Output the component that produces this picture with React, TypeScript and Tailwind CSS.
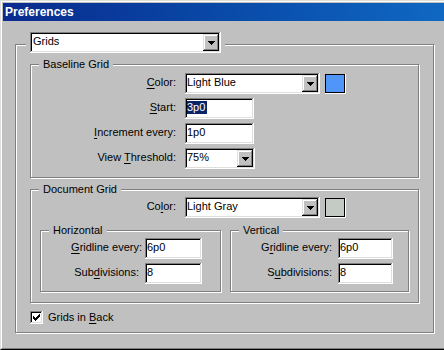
import type { ReactNode } from 'react';

// classic 3D edges
const sunken =
  'shadow-[inset_-1px_-1px_0_#fff,inset_1px_1px_0_#808080,inset_-2px_-2px_0_#dfdfdf,inset_2px_2px_0_#000]';
const raised =
  'shadow-[inset_-1px_-1px_0_#000,inset_1px_1px_0_#dfdfdf,inset_-2px_-2px_0_#808080,inset_2px_2px_0_#fff]';
const etched = 'border border-[#808080] shadow-[inset_1px_1px_0_#fff,1px_1px_0_#fff]';

function U({ children }: { children: ReactNode }) {
  return <span className="underline underline-offset-2">{children}</span>;
}

function Arrow() {
  return (
    <svg width="7" height="4" viewBox="0 0 7 4" shapeRendering="crispEdges">
      <path d="M0 0h7v1H0zM1 1h5v1H1zM2 2h3v1H2zM3 3h1v1H3z" fill="#000" />
    </svg>
  );
}

function Select({ value, className }: { value: string; className: string }) {
  return (
    <div className={`flex h-[21px] bg-white p-[2px] ${sunken} ${className}`}>
      <span className="flex-1 overflow-hidden whitespace-nowrap pt-[1px] leading-[13px]">{value}</span>
      <span className={`flex h-[17px] w-[16px] items-center justify-center bg-[#c0c0c0] pl-[1px] pt-[1px] ${raised}`}>
        <Arrow />
      </span>
    </div>
  );
}

function Field({ children, className }: { children: ReactNode; className: string }) {
  return (
    <div className={`h-[21px] bg-white p-[2px] ${sunken} ${className}`}>
      <div className="pt-[1px] leading-[13px] whitespace-nowrap">{children}</div>
    </div>
  );
}

function Swatch({ color }: { color: string }) {
  return (
    <div className="ml-[5px] mt-[1px] h-[20px] w-[21px] shadow-[inset_-1px_-1px_0_#fff] pb-[1px] pr-[1px]">
      <div className={`h-full w-full border border-black ${color}`} />
    </div>
  );
}

function Label({ children, className }: { children: ReactNode; className: string }) {
  return <div className={`pb-[2px] text-right leading-[13px] whitespace-nowrap ${className}`}>{children}</div>;
}

function GroupTitle({ children }: { children: ReactNode }) {
  return <div className="-mt-[7px] ml-[8px] w-fit bg-[#c0c0c0] px-[4px] leading-[13px]">{children}</div>;
}

export default function App() {
  return (
    <div className="h-[350px] w-[444px] overflow-hidden bg-[#c0c0c0] font-['Liberation_Sans',Arial,sans-serif] text-[11px] text-black">
      <div className="h-full border-b border-l border-t border-b-black border-l-[#dfdfdf] border-t-[#dfdfdf]">
        <div className="h-full border-b border-l border-t border-b-[#808080] border-l-white border-t-white py-[1px] pl-[1px]">
          {/* title bar */}
          <div className="flex h-[18px] items-center bg-linear-to-r from-[#0a2a8e] to-[#1068c2] pl-[2px]">
            <span className="text-[12px] font-bold leading-[14px] text-white">Preferences</span>
          </div>

          <div className={`ml-[12px] mt-[23px] w-[419px] ${etched} pb-[8px]`}>
            <div className="-mt-[13px] ml-[10px] w-fit bg-[#c0c0c0] px-[4px]">
              <Select value="Grids" className="w-[191px] pl-[3px]" />
            </div>

            {/* Baseline Grid */}
            <div className={`ml-[14px] mt-[11px] w-[389px] ${etched} pb-[8px]`}>
              <GroupTitle>Baseline Grid</GroupTitle>
              <div className="mt-[2px] flex flex-col gap-[4px]">
                <div className="flex items-center">
                  <Label className="w-[145px]">
                    <U>C</U>olor:
                  </Label>
                  <Select value="Light Blue" className="ml-[9px] w-[135px]" />
                  <Swatch color="bg-[#5096f8]" />
                </div>
                <div className="flex items-center">
                  <Label className="w-[145px]">
                    <U>S</U>tart:
                  </Label>
                  <Field className="ml-[9px] w-[69px]">
                    <span className="inline-block h-[13px] bg-[#0a246a] pr-[2px] text-white">3p0</span>
                  </Field>
                </div>
                <div className="flex items-center">
                  <Label className="w-[145px]">
                    <U>I</U>ncrement every:
                  </Label>
                  <Field className="ml-[9px] w-[69px]">1p0</Field>
                </div>
                <div className="flex items-center">
                  <Label className="w-[145px]">
                    View <U>T</U>hreshold:
                  </Label>
                  <Select value="75%" className="ml-[9px] w-[70px]" />
                </div>
              </div>
            </div>

            {/* Document Grid */}
            <div className={`ml-[14px] mt-[11px] w-[389px] ${etched} pb-[10px]`}>
              <GroupTitle>Document Grid</GroupTitle>
              <div className="mt-[1px] flex items-center">
                <Label className="w-[145px]">
                  Co<U>l</U>or:
                </Label>
                <Select value="Light Gray" className="ml-[9px] w-[135px]" />
                <Swatch color="bg-[#c4cac4]" />
              </div>

              <div className="ml-[9px] mt-[12px] flex gap-[9px]">
                <div className={`w-[181px] ${etched} pb-[7px]`}>
                  <GroupTitle>Horizontal</GroupTitle>
                  <div className="mt-[1px] flex flex-col gap-[4px]">
                    <div className="flex items-center">
                      <Label className="w-[101px]">
                        <U>G</U>ridline every:
                      </Label>
                      <Field className="ml-[3px] w-[57px]">6p0</Field>
                    </div>
                    <div className="flex items-center">
                      <Label className="w-[101px] pr-[3px]">
                        Sub<U>d</U>ivisions:
                      </Label>
                      <Field className="ml-[3px] w-[57px]">8</Field>
                    </div>
                  </div>
                </div>

                <div className={`w-[179px] ${etched} pb-[7px]`}>
                  <GroupTitle>Vertical</GroupTitle>
                  <div className="mt-[1px] flex flex-col gap-[4px]">
                    <div className="flex items-center">
                      <Label className="w-[101px]">
                        G<U>r</U>idline every:
                      </Label>
                      <Field className="ml-[6px] w-[55px]">6p0</Field>
                    </div>
                    <div className="flex items-center">
                      <Label className="w-[101px]">
                        S<U>u</U>bdivisions:
                      </Label>
                      <Field className="ml-[6px] w-[55px]">8</Field>
                    </div>
                  </div>
                </div>
              </div>
            </div>

            {/* checkbox */}
            <div className="ml-[14px] mt-[8px] flex items-center gap-[5px]">
              <div className={`flex h-[13px] w-[13px] items-center justify-center bg-white ${sunken}`}>
                <svg width="7" height="7" viewBox="0 0 7 7" shapeRendering="crispEdges">
                  <path
                    d="M6 0h1v1H6zM5 1h2v1H5zM0 2h1v1H0zM4 2h3v1H4zM0 3h2v1H0zM3 3h3v1H3zM0 4h5v1H0zM1 5h3v1H1zM2 6h1v1H2z"
                    fill="#000"
                  />
                </svg>
              </div>
              <span className="leading-[13px]">
                Grids in <U>B</U>ack
              </span>
            </div>
          </div>
        </div>
      </div>
    </div>
  );
}
